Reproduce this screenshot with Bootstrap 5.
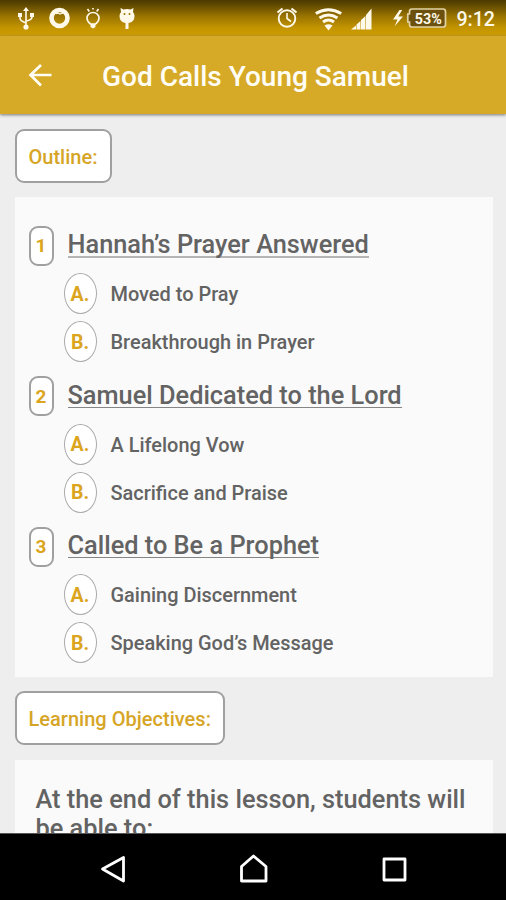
<!DOCTYPE html>
<html lang="en">
<head>
<meta charset="utf-8">
<meta name="viewport" content="width=device-width, initial-scale=1">
<title>God Calls Young Samuel</title>
<link rel="stylesheet" href="https://cdn.jsdelivr.net/npm/bootstrap@5.3.0/dist/css/bootstrap.min.css">
<style>
body{font-family:Roboto,"Liberation Sans",sans-serif;font-weight:500;background:#eee;color:#636363;height:900px;line-height:1.2}
svg{display:block;flex:none}
.status-bar{height:36px;background:linear-gradient(#4b3900 0,#5c4600 4px,#987300 16px,#c49500 28px,#cc9b00 35px,#c79b13 36px);color:#fff9e9}
.app-bar{height:78px;background:#d6aa27;color:#fffdf4;box-shadow:0 1px 3px #777;z-index:1}
.app-title{font-size:28px;margin-left:48px;padding-top:4px;white-space:nowrap}
.clock{font-size:19.6px;margin-left:11px;margin-right:-1px;padding-top:3px}
.content{padding:15px 13.5px 0 14.5px;min-height:0}
.label-box{height:54px;border:2px solid #a0a0a0;border-radius:9px;background:#fff;color:#d6a526;font-size:20px;letter-spacing:.02px;padding:2px 12px 0}
.panel{background:#fafafa;margin:14px 0}
.outline-panel{height:480px;padding:18px 14px 0}
.section-row{height:54.5px}
.section-title{font-size:25.35px;margin:5px 0 0 14px;font-weight:500;line-height:24px;border-bottom:2px solid #b5b5b5;white-space:nowrap}
.section-title.thin-rule{border-bottom:1px solid #858585}
.num-box{width:25px;height:40px;border:2px solid #a0a0a0;border-radius:9px;background:#fff;color:#dba51d;font-size:19px;font-weight:700;margin-top:7px;padding-top:2px}
.item-row{height:48px;padding-left:35px;font-size:19.95px}
.item-text{padding-top:3px}
.letter{width:33px;height:41px;border:1px solid #aaa;border-radius:50%;background:#fff;color:#dba51d;font-size:19.5px;font-weight:700;margin-right:14px;padding-top:2px}
.goal{font-size:25.35px;line-height:29px;padding:25px 15px 0 21px;margin-top:15px}
.nav-keys{height:67px;background:#000;border-top:1px solid #555;z-index:1}
</style>
<script src="https://cdn.jsdelivr.net/npm/bootstrap@5.3.0/dist/js/bootstrap.bundle.min.js"></script>
</head>
<body class="d-flex flex-column overflow-hidden m-0">
<div class="status-bar d-flex align-items-center justify-content-between flex-shrink-0">
  <svg width="150" height="36" fill="none" stroke="#fff9e9" stroke-width="1.6">
    <path d="M26 10v17M20 15v3q0 3 6 5M32 15v2q0 3-6 4"/><path d="M26 7l3 4h-6z" fill="#fff9e9" stroke="none"/><circle cx="26" cy="27" r="2.6" fill="#fff9e9" stroke="none"/><path d="M18 13h4v4h-4zM30 13h4v4h-4z" fill="#fff9e9" stroke="none"/>
    <circle cx="59.5" cy="18" r="8" stroke-width="4.6"/><path d="M56 13.500l2-.5 2 1 3-1" stroke-width="1.3"/>
    <path d="M90.500 24q-3.500-2.500-3.500-6a6 5.500 0 0 1 12 0q0 3.500-3.500 6z"/><path d="M90.500 24h5v3l-2.500 1.500-2.500-1.500z" fill="#fff9e9" stroke="none"/><path d="M87.500 9l1.800 2.500M93 8v1.500M98.500 9l-1.800 2.500"/>
    <path d="M120.500 8l3 1.500q3.500-1 7 0l3-1.500-.5 4q1.500 2 1.500 4 0 6-6 7v6h-3v-6q-6-1-6-7 0-2 1.500-4z" fill="#fff9e9" stroke="none"/><circle cx="124.500" cy="14" r="1" fill="#9b7500" stroke="none"/><circle cx="129.500" cy="14" r="1" fill="#9b7500" stroke="none"/>
  </svg>
  <div class="d-flex align-items-center pe-2 me-1">
    <svg width="170" height="36" viewBox="275 0 170 36" class="overflow-visible" fill="none" stroke="#fff9e9">
      <circle cx="287" cy="18.500" r="8.300" stroke-width="1.900"/><path d="M287 13v5.500l4 3" stroke-width="1.600"/><path d="M277.500 12.500l5-4M296.500 12.500l-5-4" stroke-width="2.200"/>
      <g stroke-width="3"><path d="M315.800 13.500q12.700-7.500 25.400 0"/><path d="M319.500 18q9-6 18 0"/><path d="M323 22q5.500-4 11 0" /></g><path d="M324.500 25.500q4-2.500 8 0l-4 5z" fill="#fff9e9" stroke="none"/>
      <path d="M351 29.500l5-4v4zM356.500 29.500v-5l4-3.500v8.500zM361 29.500V20l4.500-4v13.500zM366 29.500V15l5.500-6.500v21z" fill="#fff9e9" stroke="none"/>
      <path d="M399.500 10l-6.500 9.500h4.500l-3 7 8.500-10h-4.800l4-6.500z" fill="#fff9e9" stroke="none"/>
      <path d="M412 9h31q2.500 0 2.500 2.500v13q0 2.500-2.500 2.500h-31q-2.500 0-2.500-2.500v-2.500h-1.700v-8h1.700v-2.500q0-2.500 2.500-2.500z" fill="#6b500e" stroke-width="1.700" stroke="#e2d3a7"/>
      <text x="428.300" y="23.500" text-anchor="middle" font-size="14.500" font-weight="700" fill="#fff9e9" stroke="none" textLength="27" lengthAdjust="spacingAndGlyphs">53%</text>
    </svg>
    <span class="clock">9:12</span>
  </div>
</div>
<header class="app-bar d-flex align-items-center flex-shrink-0 position-relative">
  <svg class="ms-4" width="30" height="30" fill="none" stroke="#fffdf4" stroke-width="2.700"><path d="M27.500 15H6M17 5L6.500 15 17 25.500"/></svg>
  <h1 class="app-title mb-0 fw-medium">God Calls Young Samuel</h1>
</header>
<main class="content flex-grow-1 overflow-hidden">
  <div class="d-flex"><div class="label-box d-flex align-items-center">Outline:</div></div>
  <section class="panel outline-panel">
    <div class="section-row d-flex align-items-center"><span class="num-box d-flex align-items-center justify-content-center">1</span><h2 class="section-title">Hannah’s Prayer Answered</h2></div>
    <div class="item-row d-flex align-items-center"><span class="letter d-flex align-items-center justify-content-center">A.</span><span class="item-text">Moved to Pray</span></div>
    <div class="item-row d-flex align-items-center"><span class="letter d-flex align-items-center justify-content-center">B.</span><span class="item-text">Breakthrough in Prayer</span></div>
    <div class="section-row d-flex align-items-center"><span class="num-box d-flex align-items-center justify-content-center">2</span><h2 class="section-title thin-rule">Samuel Dedicated to the Lord</h2></div>
    <div class="item-row d-flex align-items-center"><span class="letter d-flex align-items-center justify-content-center">A.</span><span class="item-text">A Lifelong Vow</span></div>
    <div class="item-row d-flex align-items-center"><span class="letter d-flex align-items-center justify-content-center">B.</span><span class="item-text">Sacrifice and Praise</span></div>
    <div class="section-row d-flex align-items-center"><span class="num-box d-flex align-items-center justify-content-center">3</span><h2 class="section-title thin-rule">Called to Be a Prophet</h2></div>
    <div class="item-row d-flex align-items-center"><span class="letter d-flex align-items-center justify-content-center">A.</span><span class="item-text">Gaining Discernment</span></div>
    <div class="item-row d-flex align-items-center"><span class="letter d-flex align-items-center justify-content-center">B.</span><span class="item-text">Speaking God’s Message</span></div>
  </section>
  <div class="d-flex"><div class="label-box d-flex align-items-center">Learning Objectives:</div></div>
  <section class="panel goal">At the end of this lesson, students will be able to:</section>
</main>
<nav class="nav-keys d-flex align-items-center flex-shrink-0">
  <svg width="506" height="66" viewBox="0 834 506 66" fill="none" stroke="#fff" stroke-width="2.800" stroke-linejoin="round"><path d="M123.500 857.500v23.500L102.500 869z"/><path d="M241.500 881v-14.500l12-10.500 12.500 10.500V881z"/><path d="M384 859h21v21h-21z"/></svg>
</nav>
</body>
</html>
